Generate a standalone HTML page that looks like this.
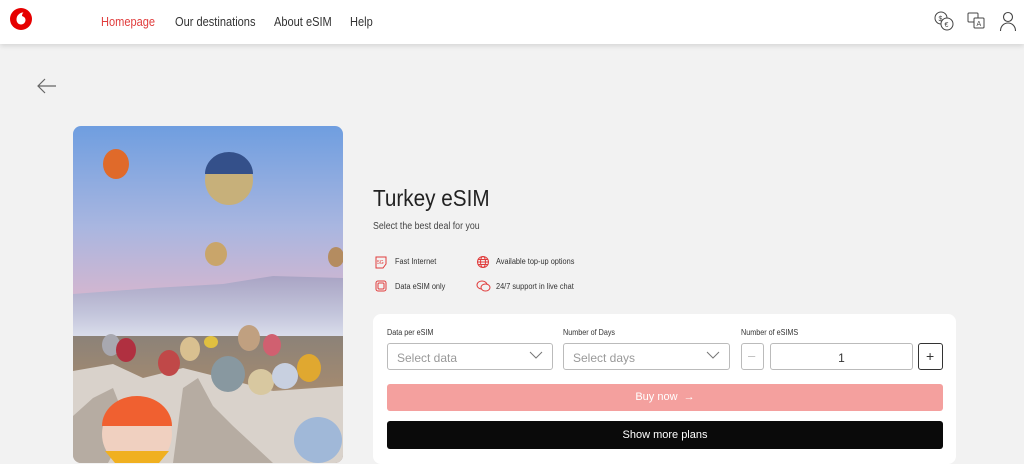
<!DOCTYPE html>
<html><head><meta charset="utf-8"><style>
*{margin:0;padding:0;box-sizing:border-box}
body{width:1024px;height:463px;overflow:hidden;background:#f2f2f2;font-family:"Liberation Sans",sans-serif;position:relative;color:#222}
.hdr{position:absolute;left:0;top:0;width:1024px;height:44px;background:#fff;box-shadow:0 2px 5px rgba(0,0,0,.12)}
.nav{position:absolute;top:14px;font-size:13px;color:#333;transform:scaleX(.85);transform-origin:left}
.abs{position:absolute}
.feat{position:absolute;font-size:8px;color:#333;transform:scaleX(.92);transform-origin:left}
.card{position:absolute;left:373px;top:314px;width:583px;height:150px;background:#fff;border-radius:8px}
.lbl{position:absolute;font-size:8px;color:#333;transform:scaleX(.9);transform-origin:left}
.sel{position:absolute;height:27px;border:1px solid #bbb;border-radius:3px;font-size:12px;color:#999;padding:7px 9px}
</style></head><body>
<div class="hdr">
<svg class="abs" style="left:10px;top:8px" width="22" height="22" viewBox="0 0 22 22"><circle cx="11" cy="11" r="11" fill="#e60000"/><path d="M12.5 4.5c-3 .5-6 3-6 7 0 3 2 5 4.5 5s4.5-2 4.5-4.5c0-2.5-2-3.5-3.5-4 0-1.5.5-2.8 1.5-3.5z" fill="#fff"/></svg>
<div class="nav" style="left:101px;color:#e03c3c">Homepage</div>
<div class="nav" style="left:175px">Our destinations</div>
<div class="nav" style="left:274px">About eSIM</div>
<div class="nav" style="left:350px">Help</div>
<svg class="abs" style="left:933px;top:10px" width="22" height="22" fill="none" stroke="#444" stroke-width="1"><circle cx="8" cy="8" r="6"/><circle cx="14" cy="14" r="6" fill="#fff"/><text x="5.5" y="11" font-size="7" fill="#444" stroke="none">$</text><text x="11.5" y="17" font-size="7" fill="#444" stroke="none">€</text></svg>
<svg class="abs" style="left:967px;top:12px" width="20" height="18" fill="none" stroke="#444" stroke-width="1"><rect x="1" y="1" width="10" height="9" rx="1"/><rect x="7" y="6" width="10" height="10" rx="1" fill="#fff"/><text x="9.5" y="14" font-size="7" fill="#444" stroke="none">A</text></svg>
<svg class="abs" style="left:999px;top:10px" width="18" height="22" fill="none" stroke="#444" stroke-width="1.1"><circle cx="9" cy="7" r="4.5"/><path d="M1.5 21c0-5 3.5-8 7.5-8s7.5 3 7.5 8"/></svg>
</div>
<svg class="abs" style="left:36px;top:78px" width="22" height="16" fill="none" stroke="#666" stroke-width="1.2"><path d="M20 8H2M9 1 2 8l7 7"/></svg>

<svg class="abs" style="left:73px;top:126px;border-radius:8px" width="270" height="337" viewBox="0 0 270 337">
<defs><linearGradient id="sky" x1="0" y1="0" x2="0" y2="1"><stop offset="0" stop-color="#6f9ee0"/><stop offset=".3" stop-color="#a9b6e0"/><stop offset=".55" stop-color="#dcb6cc"/><stop offset="1" stop-color="#eab0bc"/></linearGradient>
<linearGradient id="mt" x1="0" y1="0" x2="0" y2="1"><stop offset="0" stop-color="#a9a4c4"/><stop offset=".6" stop-color="#c4c6dc"/><stop offset="1" stop-color="#dfe2ee"/></linearGradient>
<linearGradient id="gr" x1="0" y1="0" x2="0" y2="1"><stop offset="0" stop-color="#8c8278"/><stop offset=".4" stop-color="#a38a70"/><stop offset=".6" stop-color="#cfc8c0"/><stop offset="1" stop-color="#9a948c"/></linearGradient></defs>
<rect width="270" height="337" fill="url(#sky)"/>
<path d="M0 168 L80 162 L150 158 L200 150 L270 152 V215 H0Z" fill="url(#mt)"/>
<rect y="210" width="270" height="127" fill="url(#gr)"/>
<path d="M0 245 L40 238 L70 252 L110 242 L150 252 L200 265 L270 260 V337 H0Z" fill="#d9d2cb"/>
<path d="M20 272 L40 262 L55 300 L35 337 H0 V290Z M110 262 L125 252 L140 280 L160 300 L200 337 H100Z" fill="#b6aca2"/>
<ellipse cx="43" cy="38" rx="13" ry="15" fill="#e06a2a"/><ellipse cx="156" cy="54" rx="24" ry="25" fill="#c7b07a"/><path d="M132 48 a24 22 0 0 1 48 0z" fill="#34508a"/>
<ellipse cx="143" cy="128" rx="11" ry="12" fill="#c9a56a"/><ellipse cx="263" cy="131" rx="8" ry="10" fill="#b48c60"/>
<ellipse cx="38" cy="219" rx="9" ry="11" fill="#a8a8b0"/><ellipse cx="53" cy="224" rx="10" ry="12" fill="#b03040"/>
<ellipse cx="96" cy="237" rx="11" ry="13" fill="#c04848"/><ellipse cx="117" cy="223" rx="10" ry="12" fill="#d9c090"/>
<ellipse cx="138" cy="216" rx="7" ry="6" fill="#e0c040"/><ellipse cx="176" cy="212" rx="11" ry="13" fill="#c0a080"/>
<ellipse cx="199" cy="219" rx="9" ry="11" fill="#d06070"/><ellipse cx="155" cy="248" rx="17" ry="18" fill="#8898a0"/>
<ellipse cx="188" cy="256" rx="13" ry="13" fill="#d8c8a0"/><ellipse cx="212" cy="250" rx="13" ry="13" fill="#c8d0e0"/>
<ellipse cx="236" cy="242" rx="12" ry="14" fill="#e0a830"/><ellipse cx="245" cy="314" rx="24" ry="23" fill="#a0b8d8"/>
<ellipse cx="64" cy="308" rx="35" ry="35" fill="#f0d0c0"/><path d="M29 300 a35 30 0 0 1 70 0z" fill="#f06030"/><path d="M32 325 h64 l-10 12 h-44z" fill="#f0b020"/>
</svg>

<div class="abs" style="left:373px;top:185px;font-size:23px;color:#222;transform:scaleX(.9);transform-origin:left">Turkey eSIM</div>
<div class="abs" style="left:373px;top:221px;font-size:10px;color:#444;transform:scaleX(.88);transform-origin:left">Select the best deal for you</div>
<svg class="abs" style="left:374px;top:255px" width="14" height="14" fill="none" stroke="#e03c3c" stroke-width="1"><path d="M2 2h10v7l-3 4H2z"/><text x="3" y="9" font-size="5" fill="#e03c3c" stroke="none">5G</text></svg>
<div class="feat" style="left:395px;top:257px">Fast Internet</div>
<svg class="abs" style="left:374px;top:279px" width="14" height="14" fill="none" stroke="#e03c3c" stroke-width="1"><rect x="2" y="2" width="10" height="10" rx="2"/><rect x="4" y="4" width="6" height="6" rx="1"/></svg>
<div class="feat" style="left:395px;top:282px">Data eSIM only</div>
<svg class="abs" style="left:476px;top:255px" width="14" height="14" fill="none" stroke="#e03c3c" stroke-width="1"><circle cx="7" cy="7" r="5.5"/><ellipse cx="7" cy="7" rx="2.5" ry="5.5"/><path d="M1.5 7h11M2.5 4.5h9M2.5 9.5h9"/></svg>
<div class="feat" style="left:496px;top:257px">Available top-up options</div>
<svg class="abs" style="left:476px;top:279px" width="15" height="14" fill="none" stroke="#e03c3c" stroke-width="1"><ellipse cx="6" cy="6" rx="5" ry="4"/><ellipse cx="9.5" cy="8.5" rx="4.5" ry="3.5" fill="#f2f2f2"/></svg>
<div class="feat" style="left:496px;top:282px">24/7 support in live chat</div>

<div class="card">
<div class="lbl" style="left:14px;top:14px">Data per eSIM</div>
<div class="lbl" style="left:190px;top:14px">Number of Days</div>
<div class="lbl" style="left:368px;top:14px">Number of eSIMS</div>
<div class="sel" style="left:14px;top:29px;width:166px">Select data</div>
<div class="sel" style="left:190px;top:29px;width:167px">Select days</div>
<svg class="abs" style="left:156px;top:37px" width="14" height="9" fill="none" stroke="#777"><path d="M1 1l6 6 6-6"/></svg>
<svg class="abs" style="left:333px;top:37px" width="14" height="9" fill="none" stroke="#777"><path d="M1 1l6 6 6-6"/></svg>
<div class="sel" style="left:368px;top:29px;width:23px;color:#bbb;padding:4px 6px;font-size:13px">–</div>
<div class="sel" style="left:397px;top:29px;width:143px;color:#333;text-align:center">1</div>
<div class="sel" style="left:545px;top:29px;width:25px;border:1.5px solid #333;color:#333;padding:4px 7px;font-size:14px">+</div>
<div class="abs" style="left:14px;top:70px;width:556px;height:27px;background:#f4a09e;border-radius:3px;color:#fff;font-size:11px;text-align:center;line-height:27px">Buy now &nbsp;→</div>
<div class="abs" style="left:14px;top:107px;width:556px;height:28px;background:#0a0a0a;border-radius:3px;color:#fff;font-size:11px;text-align:center;line-height:28px">Show more plans</div>
</div>
</body></html>
